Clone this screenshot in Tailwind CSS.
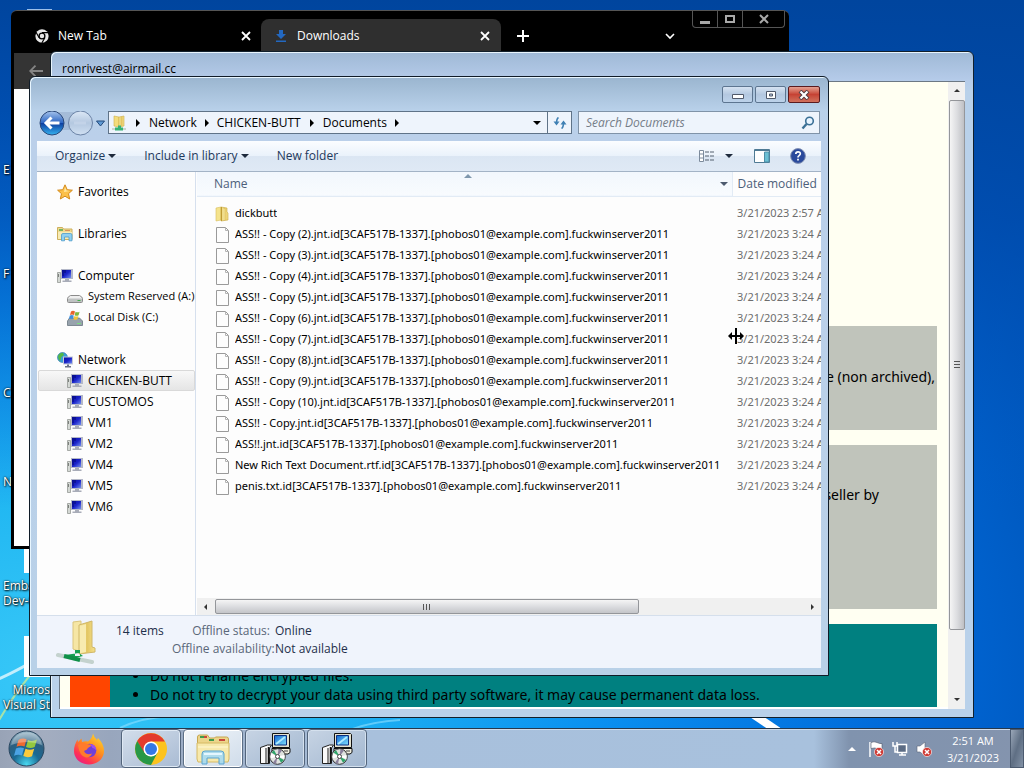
<!DOCTYPE html>
<html lang="en">
<head>
  <meta charset="UTF-8" />
  <meta name="viewport" content="width=device-width, initial-scale=1.0"/>
  <title>Documents</title>
  <script src="https://cdn.jsdelivr.net/npm/@tailwindcss/browser@4"></script>
</head>
<body class="h-screen overflow-hidden font-['Open_Sans','Noto_Sans',sans-serif] text-xs text-black">

  <!-- Shared icons -->
  <svg class="absolute size-0">
    <defs>
      <linearGradient id="gFolder" x1="0" y1="0" x2="1" y2="0">
        <stop offset="0" stop-color="#f9eda6"/><stop offset=".5" stop-color="#e3c663"/><stop offset="1" stop-color="#f5e08a"/>
      </linearGradient>
      <linearGradient id="gScreen" x1="0" y1="0" x2="1" y2="1">
        <stop offset="0" stop-color="#0a12a8"/><stop offset=".5" stop-color="#1a22c8"/><stop offset="1" stop-color="#6f8cf0"/>
      </linearGradient>
      <linearGradient id="gMonitor" x1="0" y1="0" x2="1" y2="1">
        <stop offset="0" stop-color="#1268d0"/><stop offset="1" stop-color="#7fe0ff"/>
      </linearGradient>
    </defs>
    <symbol id="file" viewBox="0 0 16 16">
      <path d="M1.500.5h9l3 3v12h-12z" fill="#fdfdfd" stroke="#9a9a9a"/>
      <path d="M10.500.5v3h3" fill="none" stroke="#b4b4b4"/>
    </symbol>
    <symbol id="folder" viewBox="0 0 16 16">
      <path d="M1 2l5-1v13l-5 1z" fill="#f5e38c" stroke="#d6bd5c" stroke-width=".6"/>
      <path d="M6 1l6 1v4l1 1v7l-7 1z" fill="url(#gFolder)" stroke="#c9a93f" stroke-width=".6"/>
      <path d="M6.500 1v14" stroke="#c09c34"/>
      <path d="M9 3v11" stroke="#f7eaa8"/>
    </symbol>
    <symbol id="star" viewBox="0 0 16 16">
      <path d="M8 .8l2.200 4.900 5.200.5-3.900 3.500 1.200 5.300L8 12.200 3.300 15l1.200-5.300L.6 6.200l5.200-.5z" fill="#fbc04a" stroke="#d48b1c"/>
      <path d="M8 3l1.400 3.600 3.600.4-6 1z" fill="#ffe7a0"/>
    </symbol>
    <symbol id="libraries" viewBox="0 0 16 16">
      <path d="M.5 1.500h5l1 1.500h8.500v10.500H.5z" fill="#f0da92" stroke="#cdb05c"/>
      <path d="M2 4h4" stroke="#4fa84c" stroke-width="1.500"/><path d="M8 4.500h5" stroke="#d8935c"/>
      <path d="M1 6h14v7H1z" fill="#f8ebb4"/>
      <path d="M4.500 14.800V9q0-1.500 1.500-1.500h7.500q1.500 0 1.500 1.500v5.800h-3V11h-4.500v3.800z" fill="#8fd0f0" stroke="#4b9ccc" stroke-width=".8"/>
    </symbol>
    <symbol id="pc" viewBox="0 0 16 16">
      <path d="M.5 4.500h3v10h-3z" fill="#d4d8d4" stroke="#8a8e8a" stroke-width=".7"/>
      <path d="M1.500 6v3" stroke="#7c807c"/>
      <path d="M4 1h12v10H4z" fill="#b4b8c8"/>
      <path d="M5 2h9v8H5z" fill="url(#gScreen)"/>
      <path d="M5 2h4v3H7v3H5z" fill="#060c80" fill-opacity=".6"/>
      <path d="M8 11h4v1.500h2.500V14h-9v-1.500H8z" fill="#a8acb8"/>
    </symbol>
    <symbol id="drive" viewBox="0 0 16 16">
      <path d="M3.500 6.500h9q3 1.500 3 3v3q0 1-1 1h-13q-1 0-1-1v-3q0-1.500 3-3z" fill="#efefef" stroke="#8b8b8b"/>
      <path d="M1 9.500h14v3.500H1z" fill="#bfc2c2"/>
      <path d="M10.500 11.500h3" stroke="#43b04a"/>
    </symbol>
    <symbol id="osdrive" viewBox="0 0 16 16">
      <path d="M2.500 8h10l3 3v4.500h-15V11z" fill="#98a3ad" stroke="#697680" stroke-width=".8"/>
      <path d="M10 13.500h4" stroke="#7be07e"/>
      <path d="M4 1.500q2-1.500 4 0L7 5q-2-1.200-4 0z" fill="#e8632c"/>
      <path d="M8.600 1.800q2 1 4 0l-1 3.400q-2 1-4 0z" fill="#7fb83c"/>
      <path d="M2.800 5.600q2-1.200 4 0l-1 3.400q-2-1.200-4 0z" fill="#3f8fdc"/>
      <path d="M7.400 5.900q2 1 4 0l-1 3.400q-2 1-4 0z" fill="#f3c437"/>
    </symbol>
    <symbol id="network" viewBox="0 0 16 16">
      <circle cx="5.500" cy="5.500" r="5" fill="#3a9fd8" stroke="#2b74a8" stroke-width=".6"/>
      <path d="M1 4q2-3.500 5-3.300L7 3 4.500 5 3 9 1.500 7z" fill="#53b848"/>
      <path d="M6 4.500h10v8H6z" fill="#c4c8d6"/>
      <path d="M7 5.500h8v6H7z" fill="url(#gScreen)"/>
      <path d="M10 12.500h2v1.500h2v1.500H8V14h2z" fill="#6a7288"/>
    </symbol>
    <symbol id="netfolder" viewBox="0 0 16 16">
      <path d="M3 1l5 1v10l-5-1z" fill="#f3dc7c" stroke="#cfae48" stroke-width=".6"/>
      <path d="M8 2l5-1v10l-5 1z" fill="url(#gFolder)" stroke="#cfae48" stroke-width=".6"/>
      <path d="M1 13h14v2H1z" fill="#c9d6cf"/>
      <path d="M4 12.500h8v3H4zM7 10.500h3v3H7z" fill="#35b274"/>
    </symbol>
    <symbol id="installer" viewBox="0 0 32 32">
      <path d="M13.500.5h16l1 1v13h-17z" fill="#e4e2d0" stroke="#111"/>
      <path d="M15.500 2.500h12v9.500h-12z" fill="url(#gMonitor)" stroke="#0b2f80"/>
      <path d="M17 11L26 4" stroke="#aeeaff" stroke-width="2"/>
      <path d="M13 15.500h18v4l-2 1.500H13z" fill="#f0eee0" stroke="#111"/>
      <path d="M25 18h4" stroke="#444"/>
      <path d="M1.500 14.500l7-2.500h4l-2 3v15.500h-9z" fill="#fafafa" stroke="#222"/>
      <path d="M7 15v15" stroke="#8a8a8a" stroke-width="2"/><path d="M9.500 14v16" stroke="#111" stroke-width="1.500"/>
      <circle cx="18.500" cy="23.500" r="7.800" fill="#dfe2df" stroke="#333"/>
      <path d="M18.500 23.500l-6-4 2.500-2.500zM18.500 23.500l6.500 3.500-3 2.800z" fill="#2fa46a"/>
      <path d="M18.500 23.500l-7 2 .6-5zM18.500 23.500l7-1.500v4z" fill="#fff"/>
      <path d="M18.500 23.500l1-7.500 3.500 1.500zM18.500 23.500l-1.500 7.500-3-1.500z" fill="#8a7f9c"/>
      <circle cx="18.500" cy="23.500" r="2" fill="#fff" stroke="#444"/>
    </symbol>
    <symbol id="badge" viewBox="0 0 10 10">
      <circle cx="5" cy="5" r="4.600" fill="#cf3a34" stroke="#fff" stroke-width=".6"/>
      <path d="M3 3l4 4M7 3L3 7" stroke="#fff" stroke-width="1.500"/>
    </symbol>
  </svg>

  <main class="relative flex h-full flex-col bg-[radial-gradient(ellipse_at_5%_88%,#38c8f8_0%,#22b8f2_18%,#0a90f0_40%,#0068d8_62%,#0052b4_80%,#00428e_100%)]">

    <!-- Desktop -->
    <div class="relative flex-1 overflow-hidden">
      <svg class="absolute inset-0 h-full w-full" viewBox="0 0 1024 728" preserveAspectRatio="none" fill="none">
        <defs>
          <linearGradient id="gSky" x1="0" y1="0" x2="0" y2="1"><stop offset="0" stop-color="#00459e"/><stop offset=".3" stop-color="#004cb0" stop-opacity=".7"/><stop offset=".7" stop-color="#0060d0" stop-opacity="0"/></linearGradient>
        </defs>
        <path d="M0 0h1024v728H0z" fill="url(#gSky)"/>
        <path d="M-4 680Q16 672 52 650" stroke="#fff" stroke-opacity=".7" stroke-width="3"/>
        <path d="M-2 722Q16 690 40 664" stroke="#d9f08a" stroke-opacity=".7" stroke-width="2"/>
        <path d="M748 711l30 20" stroke="#fff" stroke-width="8"/>
        <path d="M120 728q20-10 50-12M350 730q20-8 50-10" stroke="#8fe0ff" stroke-opacity=".6" stroke-width="2"/>
        <path d="M27 10h25" stroke="#9cc0ea" stroke-width="2"/>
      </svg>

      <!-- Shortcut labels -->
      <div class="absolute left-[3px] top-[162px] flex flex-col whitespace-nowrap leading-4 text-white text-shadow-[1px_1px_2px_#000,0_0_2px_#000]">
        <span class="mb-[88px]">E</span>
        <span class="mb-[103px]">F</span>
        <span class="mb-[73px]">C</span>
        <span class="mb-[88px]">N</span>
        <span class="leading-[15px]">Embarcadero<br/>Dev-C++</span>
      </div>
      <div class="absolute left-6 top-[540px] h-[33px] w-8 bg-white"></div>
      <div class="absolute left-6 top-[636px] h-[41px] w-8 bg-white"></div>
      <p class="absolute left-[3px] top-[682px] whitespace-nowrap text-center leading-[15px] text-white text-shadow-[1px_1px_2px_#000,0_0_2px_#000]">Microsoft<br/>Visual Studio</p>

      <!-- Chrome window -->
      <section class="absolute bottom-[179px] left-[11px] right-[235px] top-[10px] flex flex-col rounded-t-md border-t border-[#555] bg-black pb-[3px] pl-[3px] pr-0.5">
        <div class="relative flex h-[42px] items-end">
          <div class="flex h-[34px] w-[247px] items-center pl-[21px] pr-[10px] text-white">
            <svg class="mr-[9px] size-3.5" viewBox="0 0 16 16">
              <circle cx="8" cy="8" r="7.600" fill="#e8e8e8"/>
              <path d="M8 4.200h7M4.700 9.900L1.200 3.800M11.300 9.900L7.800 16" stroke="#000" stroke-width="1.300"/>
              <circle cx="8" cy="8" r="3.300" fill="#e8e8e8" stroke="#000" stroke-width="1.500"/>
            </svg>
            <span class="flex-1">New Tab</span>
            <button aria-label="Close New Tab"><svg class="size-[10px]" viewBox="0 0 10 10"><path d="M1 1l8 8M9 1L1 9" stroke="#fff" stroke-width="1.800"/></svg></button>
          </div>
          <div class="flex h-[34px] w-60 items-center rounded-t-lg bg-[#2f2f2f] pl-3.5 pr-[11px] text-white">
            <svg class="mr-[10px] size-3" viewBox="0 0 12 12"><path d="M4 0h4v4h3L6 9 1 4h3zM1 10.500h10V12H1z" fill="#2368c0"/></svg>
            <span class="flex-1">Downloads</span>
            <button aria-label="Close Downloads"><svg class="size-[10px]" viewBox="0 0 10 10"><path d="M1 1l8 8M9 1L1 9" stroke="#fff" stroke-width="1.800"/></svg></button>
          </div>
          <button class="mb-[11px] ml-4" aria-label="New tab"><svg class="size-3" viewBox="0 0 12 12"><path d="M6 0v12M0 6h12" stroke="#fff" stroke-width="2"/></svg></button>
          <button class="mb-[13px] ml-auto mr-28" aria-label="Search tabs"><svg class="h-2 w-[10px]" viewBox="0 0 10 8"><path d="M1 2l4 4 4-4" fill="none" stroke="#fff" stroke-width="1.600"/></svg></button>
          <div class="absolute right-0.5 top-0 flex h-[17px] divide-x divide-[#555] rounded-b-sm border border-t-0 border-[#555]">
            <button class="w-[25px]" aria-label="Minimize"><svg class="mx-auto h-3 w-4" viewBox="0 0 16 12"><path d="M3 8h10v3H3z" fill="#a8a8a8"/></svg></button>
            <button class="w-[25px]" aria-label="Maximize"><svg class="mx-auto h-3 w-4" viewBox="0 0 16 12"><path d="M4 3h8v6H4z" fill="none" stroke="#a8a8a8" stroke-width="2"/></svg></button>
            <button class="w-[41px]" aria-label="Close"><svg class="mx-auto h-3 w-4" viewBox="0 0 16 12"><path d="M4 2l8 8M12 2l-8 8" stroke="#a8a8a8" stroke-width="2"/></svg></button>
          </div>
        </div>
        <div class="flex h-9 items-center bg-[#343434] pl-[15px]">
          <button aria-label="Back"><svg class="h-3 w-3.5" viewBox="0 0 14 12"><path d="M14 6H1M6.500.7L1.200 6l5.300 5.300" fill="none" stroke="#858585" stroke-width="1.800"/></svg></button>
        </div>
        <div class="flex-1 bg-white"></div>
      </section>

      <!-- Ransom note window -->
      <section class="absolute bottom-[10px] left-[50px] right-[50px] top-[51px] flex flex-col rounded-t-md border border-[#12202c] bg-[linear-gradient(#9fb9d6,#b5cbe9_28px,#b9d1ea_40px)] px-2 pb-2 shadow-[inset_1px_1px_0_#e8f4fc]">
        <h2 class="pl-[3px] pt-[9px] text-xs leading-4">ronrivest@airmail.cc</h2>
        <div class="mt-1 flex min-h-0 flex-1 border-l border-t border-[#6c7884] bg-[#fffff2]">
          <div class="flex min-w-0 flex-1 flex-col gap-[15px] overflow-hidden border-b-2 border-white pl-[10px] pr-[11px] pt-[244px] font-['Noto_Sans',sans-serif] text-sm">
            <div class="flex h-[104px] shrink-0 items-center justify-end bg-[#c0c4bb] pb-0.5 pr-0.5">e (non archived),</div>
            <div class="h-[164px] shrink-0 bg-[#c0c4bb] pr-[58px] pt-10 text-right">seller by</div>
            <div class="min-h-0 flex-1 border-l-40 border-[#ff4500] bg-[#008080] pl-10 pt-[42px]">
              <ul class="list-disc leading-[19px]">
                <li>Do not rename encrypted files.</li>
                <li>Do not try to decrypt your data using third party software, it may cause permanent data loss.</li>
              </ul>
            </div>
          </div>
          <div class="flex w-[17px] flex-col items-center bg-[#f0f0f0]">
            <svg class="h-[18px] w-2" viewBox="0 0 8 18"><path d="M1 10l3-3 3 3z" fill="#333"/></svg>
            <div class="flex h-[530px] w-4 items-center justify-center rounded-xs border border-[#94969a] bg-linear-to-r from-[#f5f5f5] via-[#dcdde0] to-[#bfc0c4]">
              <svg class="h-2 w-2" viewBox="0 0 8 8"><path d="M1 .5h6M1 3.500h6M1 6.500h6" stroke="#555"/></svg>
            </div>
            <svg class="mt-auto h-[18px] w-2" viewBox="0 0 8 18"><path d="M1 7l3 3 3-3z" fill="#333"/></svg>
          </div>
        </div>
      </section>

      <!-- Explorer window -->
      <section class="absolute bottom-[52px] left-[29px] right-[195px] top-[76px] flex flex-col rounded-t-md border border-[#101c28] bg-[linear-gradient(#9ab5cf,#b9d1ea_34px,#bbd0ea_60px,#b9d1e8)] px-[7px] pb-[7px] shadow-[inset_1px_1px_0_#e8f6ff]">
        <div class="flex h-[34px] items-start justify-end gap-0.5 pr-px pt-[9px]">
          <button aria-label="Minimize" class="flex h-[17px] w-[31px] items-center justify-center rounded-xs border border-[#5d7590] bg-linear-to-b from-[#d6e3f2] via-[#b4c8e0] to-[#bcd2ea]"><svg class="h-[10px] w-3" viewBox="0 0 12 10"><path d="M.5 4.500h11v4H.5z" fill="#fff" stroke="#50596a"/></svg></button>
          <button aria-label="Maximize" class="flex h-[17px] w-[31px] items-center justify-center rounded-xs border border-[#5d7590] bg-linear-to-b from-[#d6e3f2] via-[#b4c8e0] to-[#bcd2ea]"><svg class="h-[10px] w-3" viewBox="0 0 12 10"><path d="M1.500 1.500h9v7h-9z" fill="#fff" stroke="#50596a"/><path d="M4.500 4h3v2h-3z" fill="#b4c8e0" stroke="#50596a"/></svg></button>
          <button aria-label="Close" class="flex h-[17px] w-8 items-center justify-center rounded-xs border border-[#5a1a1e] bg-linear-to-b from-[#e3a092] via-[#c64234] to-[#d0705c]"><svg class="h-[10px] w-3" viewBox="0 0 12 10"><path d="M2 1l8 8M10 1L2 9" stroke="#4c3a40" stroke-width="4"/><path d="M2.500 1.500l7 7M9.500 1.500l-7 7" stroke="#fff" stroke-width="2.200"/></svg></button>
        </div>

        <!-- Address bar -->
        <div class="flex h-[30px] items-start pr-px">
          <svg class="h-7 w-[71px] shrink-0" viewBox="0 0 71 28">
            <defs>
              <linearGradient id="gBack" x1="0" y1="0" x2="0" y2="1"><stop offset="0" stop-color="#a7c4ec"/><stop offset=".48" stop-color="#2f68c4"/><stop offset=".5" stop-color="#0c3c9e"/><stop offset="1" stop-color="#35b3f0"/></linearGradient>
              <linearGradient id="gFwd" x1="0" y1="0" x2="0" y2="1"><stop offset="0" stop-color="#dce8f6"/><stop offset=".5" stop-color="#b4c8e0"/><stop offset="1" stop-color="#d0e0f2"/></linearGradient>
            </defs>
            <path d="M15 1h28q8 0 12 8l-6 10H15z" fill="#9db4d0" fill-opacity=".7"/>
            <circle cx="15" cy="12" r="12" fill="url(#gBack)" stroke="#2b4878"/>
            <path d="M22.500 12h-12M14.500 6.500L9 12l5.500 5.500" fill="none" stroke="#fff" stroke-width="3"/>
            <circle cx="43.500" cy="12" r="12" fill="url(#gFwd)" stroke="#6b83a6"/>
            <path d="M37 12h12" stroke="#c3d3e8" stroke-width="3"/>
            <path d="M59.500 10h8l-4 5z" fill="#5f9ad4" stroke="#234a7c"/>
          </svg>
          <nav class="flex h-[23px] min-w-0 flex-1 items-center border border-[#5f7388] bg-[#eef4fc]">
            <svg class="ml-0.5 size-4"><use href="#netfolder"/></svg>
            <svg class="mx-[9px] h-2 w-1" viewBox="0 0 4 8"><path d="M0 0l4 4-4 4z"/></svg>
            <a href="#network">Network</a>
            <svg class="mx-2 h-2 w-1" viewBox="0 0 4 8"><path d="M0 0l4 4-4 4z"/></svg>
            <a href="#host">CHICKEN-BUTT</a>
            <svg class="mx-[9px] h-2 w-1" viewBox="0 0 4 8"><path d="M0 0l4 4-4 4z"/></svg>
            <a href="#documents">Documents</a>
            <svg class="mx-2 h-2 w-1" viewBox="0 0 4 8"><path d="M0 0l4 4-4 4z"/></svg>
            <button class="ml-auto mr-1.5" aria-label="Previous locations"><svg class="h-1 w-2" viewBox="0 0 8 4"><path d="M0 0h8L4 4z"/></svg></button>
            <button class="flex h-full w-6 items-center justify-center border-l border-[#5f7388]" aria-label="Refresh">
              <svg class="h-3 w-3.5" viewBox="0 0 14 12"><path d="M5.500.5Q3.500 1.500 3.500 7M8.500 11.500q2-1 2-6.500" fill="none" stroke="#3f80b4" stroke-width="1.600"/><path d="M.5 4.500h6l-3 4zM7.500 7.500h6l-3-4z" fill="#3f80b4"/></svg>
            </button>
          </nav>
          <label class="ml-[6px] flex h-[23px] w-[242px] items-center border border-[#8093a8] bg-[#eef4fc] pl-[7px] pr-1">
            <input type="text" aria-label="Search Documents" placeholder="Search Documents" class="min-w-0 flex-1 italic outline-none placeholder:text-[#757d88]"/>
            <svg class="size-3.5" viewBox="0 0 14 14"><circle cx="8.500" cy="5" r="3.800" fill="#e8f4ff" stroke="#3b7096" stroke-width="1.600"/><path d="M5.500 8L1.500 12.500" stroke="#3b7096" stroke-width="2.400"/></svg>
          </label>
        </div>

        <!-- Toolbar -->
        <div class="flex h-[31px] shrink-0 items-center border-b border-[#a3b3c6] bg-[linear-gradient(#fbfdff,#eaf2fb_50%,#dbe6f3_51%,#dfe9f5)] pl-[18px] pr-[15px] text-[#1e395b]">
          <button class="flex items-center gap-[3px]">Organize<svg class="h-1 w-2" viewBox="0 0 8 4"><path d="M0 0h8L4 4z" fill="#1e2a3c"/></svg></button>
          <button class="ml-7 flex items-center gap-[3px]">Include in library<svg class="h-1 w-2" viewBox="0 0 8 4"><path d="M0 0h8L4 4z" fill="#1e2a3c"/></svg></button>
          <button class="ml-7">New folder</button>
          <button class="ml-auto flex items-center gap-[10px]" aria-label="Change your view">
            <svg class="h-3 w-4" viewBox="0 0 16 12"><path d="M.5.5h4v11h-4zM.5 4h4M.5 8h4" fill="#fff" stroke="#7c8b9c"/><path d="M6 2h4M6 6h4M6 10h4M11 2h4M11 6h4M11 10h4" stroke="#54616f"/></svg>
            <svg class="h-1 w-2" viewBox="0 0 8 4"><path d="M0 0h8L4 4z" fill="#1e2a3c"/></svg>
          </button>
          <button class="ml-[21px]" aria-label="Show the preview pane">
            <svg class="h-3.5 w-4" viewBox="0 0 16 14"><path d="M.5.5h15v13H.5z" fill="#fff" stroke="#4f7a94"/><path d="M0 1.500h16" stroke="#4f7a94"/><path d="M10.500 3h4.500v10h-4.500z" fill="#6cc0d4" stroke="#4f8ea6"/></svg>
          </button>
          <button class="ml-5" aria-label="Get help">
            <svg class="size-4" viewBox="0 0 16 16"><circle cx="8" cy="8" r="7.400" fill="#2a4a9c" stroke="#8492b4"/><path d="M5.800 6q0-2.200 2.300-2.200t2.200 2q0 1-1.200 1.800T8 9.500M8 10.800v1.700" fill="none" stroke="#fff" stroke-width="1.700"/></svg>
          </button>
        </div>

        <div class="flex min-h-0 flex-1 bg-[#fdfdfd]">
          <!-- Navigation pane -->
          <aside id="nav" class="w-[159px] shrink-0 overflow-hidden whitespace-nowrap border-r border-[#d6e0ee] pl-px pt-[9px]"></aside>

          <!-- File list -->
          <div class="flex min-w-0 flex-1 flex-col pl-px">
            <div class="min-h-0 flex-1 overflow-hidden">
              <table class="w-full table-fixed">
                <thead>
                  <tr class="h-6 border-b border-[#e2ebf5] bg-linear-to-b from-[#f2f7fd] to-[#f8fbfe] text-left text-[#4c607a]">
                    <th class="relative w-[535px] border-r border-[#e2ebf5] pl-[17px] pr-1 font-normal">
                      <div class="flex items-center justify-between">Name<svg class="h-1 w-2" viewBox="0 0 8 4"><path d="M0 0h8L4 4z" fill="#4c5a6e"/></svg></div>
                      <svg class="absolute left-1/2 top-0.5 h-1 w-2" viewBox="0 0 8 4"><path d="M0 4l4-4 4 4z" fill="#7f97ad"/></svg>
                    </th>
                    <th class="overflow-hidden whitespace-nowrap bg-[#fdfdfd] pl-[5px] font-normal">Date modified</th>
                  </tr>
                  <tr class="h-[7px]"></tr>
                </thead>
                <tbody id="files" class="font-['Noto_Sans',sans-serif] text-[11px]"></tbody>
              </table>
            </div>
            <div class="flex h-[17px] items-center bg-[#f0f0f0]">
              <svg class="h-2 w-[18px]" viewBox="0 0 18 8"><path d="M10 1v6L7 4z" fill="#333"/></svg>
              <div class="flex h-[15px] w-[424px] items-center justify-center rounded-xs border border-[#94969a] bg-linear-to-b from-[#f5f5f5] via-[#dcdde0] to-[#c4c5c9]">
                <svg class="size-2" viewBox="0 0 8 8"><path d="M.5 1v6M3.500 1v6M6.500 1v6" stroke="#555"/></svg>
              </div>
              <svg class="ml-auto h-2 w-[18px]" viewBox="0 0 18 8"><path d="M8 1v6l3-3z" fill="#333"/></svg>
            </div>
          </div>
        </div>

        <!-- Details pane -->
        <footer class="flex h-[53px] shrink-0 items-start border-t border-[#d5dfec] bg-[#f0f4fc] pl-[18px] text-[#1e2f4b]">
          <svg class="mt-1 h-11 w-11" viewBox="0 0 44 44">
            <path d="M18 2l8-1v31l-8-3z" fill="#f6e6a4" stroke="#dcc67c"/>
            <path d="M24 5l13-4v26l3 1v4l-16 2z" fill="url(#gFolder)" stroke="#d0b768"/>
            <path d="M25 6l6-2v28l-6 1z" fill="#f8ebb0"/>
            <path d="M3 35l34 7" stroke="#c4d2ce" stroke-width="4" stroke-linecap="round"/>
            <path d="M10 35l10 3 8-2-4-3zM20 30h5v6h-5z" fill="#16a052"/>
            <path d="M9 36l16 4" stroke="#0f9048" stroke-width="4"/>
          </svg>
          <p class="ml-[17px] w-14 pt-[6px] leading-[18px]">14 items</p>
          <dl class="grid grid-cols-[98px_auto] gap-x-[5px] whitespace-nowrap pt-[6px] leading-[18px]">
            <dt class="text-right text-[#5a6779]">Offline status:</dt><dd>Online</dd>
            <dt class="text-right text-[#5a6779]">Offline availability:</dt><dd>Not available</dd>
          </dl>
        </footer>
      </section>

      <!-- Column resize pointer -->
      <svg class="absolute left-[728px] top-[328px] h-4 w-4" viewBox="0 0 16 16"><path d="M0 8l4-4v3h8V4l4 4-4 4V9H4v3zM7 0h2v16H7z"/></svg>
    </div>

    <!-- Taskbar -->
    <footer class="flex h-10 shrink-0 items-center border-t border-[#26384c] bg-[linear-gradient(90deg,#98a3b6_0,#a3adc0_45px,#98a6bd_110px,#a8c0dc_370px,#a8c1dd_calc(100%-210px),#8093ae_calc(100%-175px),#8494ae_100%)] shadow-[inset_0_1px_0_#cfdcec]">
      <button class="ml-2" aria-label="Start">
        <svg class="size-[37px]" viewBox="0 0 37 37">
          <defs><radialGradient id="gOrb" cx=".5" cy=".95" r=".95"><stop offset="0" stop-color="#4ad8f0"/><stop offset=".4" stop-color="#1a6a94"/><stop offset=".7" stop-color="#2c5f80"/><stop offset="1" stop-color="#9fbccc"/></radialGradient></defs>
          <circle cx="18.500" cy="18.500" r="17.500" fill="url(#gOrb)" stroke="#2a4760"/>
          <path d="M10.500 10q4-2.500 8-.8l-2 7.300q-4-1.500-8 .3z" fill="#ee6a30"/>
          <path d="M20 10q4 2 9-.5l-2.300 7.600q-4.500 2-8.700-.1z" fill="#93c83e"/>
          <path d="M8 18.500q4-2 8-.3l-2.200 7.200q-4-1.500-7.800.4z" fill="#4ba3e4"/>
          <path d="M17.500 18.700q4.300 2 8.700.1L24 26.200q-4.500 2-8.700-.2z" fill="#fccb3c"/>
          <path d="M3 15Q6 3 18.500 2.500T34 15q-15-6-31 0z" fill="#fff" fill-opacity=".3"/>
        </svg>
      </button>
      <button class="ml-7 mr-4" aria-label="Firefox">
        <svg class="size-8" viewBox="0 0 32 32">
          <defs><linearGradient id="gFox" x1=".9" y1="0" x2=".2" y2="1"><stop offset="0" stop-color="#ffe22e"/><stop offset=".45" stop-color="#ff8b1e"/><stop offset=".8" stop-color="#ff2f55"/><stop offset="1" stop-color="#e3208c"/></linearGradient></defs>
          <path d="M20 .5q1 4 4 6.500l1-2q6 6 6 13C31 26 24 31.500 16 31.500S1 26 1 18q0-6 3.500-11.500L5 9l3.500-3.500.5 3.500q3-1 6-.5Q19 6 20 .5z" fill="url(#gFox)"/>
          <circle cx="16.500" cy="17.500" r="6.800" fill="#7040d8"/>
          <path d="M5 12q5-3.500 9-1l4 .8q1 1.200-1.500 2.200-2 .5-2.500 2.500l-3 1.500q2.500 5 8 2.500-1.500 4-6 4-6.500-1-8-12.500z" fill="#ff7a2c"/>
          <path d="M17 11q6 0 6.500 7-1.500-3-4-3z" fill="#a050e8"/>
        </svg>
      </button>
      <div class="flex h-full gap-0.5">
        <button aria-label="Google Chrome" class="flex w-[60px] items-center justify-center rounded-sm border border-[#53657c] bg-linear-to-br from-[#d3deeb] to-[#a9bbd3] shadow-[inset_0_0_0_1px_#dfe9f4]">
          <svg class="size-8" viewBox="0 0 32 32">
            <circle cx="16" cy="16" r="16" fill="#fcc31e"/>
            <path d="M16 8.500H29.900A16 16 0 0 0 2.200 8l6.500 12z" fill="#e33b2e"/>
            <path d="M2.200 8A16 16 0 0 0 16 32l6.500-12.200L16 23.500 9.500 19.800z" fill="#279847"/>
            <circle cx="16" cy="16" r="7.500" fill="#fff"/><circle cx="16" cy="16" r="6" fill="#3478e5"/>
          </svg>
        </button>
        <button aria-label="Windows Explorer" class="flex w-[60px] items-center justify-center rounded-sm border border-[#5c6f86] bg-linear-to-br from-[#f2f6fa] to-[#cfdcea] shadow-[inset_0_0_0_1px_#fff]">
          <svg class="h-8 w-9" viewBox="0 0 36 32">
            <path d="M2.500 4q0-2 2-2h8l2 3h5l1-1h11q2 0 2 2v20h-31z" fill="#ecd58a" stroke="#c6a650"/>
            <path d="M5 4h4M14 7h5" stroke="#3f9c4c" stroke-width="2"/><path d="M9 4h3M24 7h6" stroke="#c8473c" stroke-width="2"/>
            <path d="M2 10h32v16l-1 3H3l-1-3z" fill="#f7e9ac" stroke="#d6ba64"/>
            <path d="M3 14h30" stroke="#fff8d4"/>
            <path d="M7 31V21q0-3 3-3h16q3 0 3 3v10h-5v-6H12v6z" fill="#a6daf2" fill-opacity=".9" stroke="#5aa4cf"/>
            <path d="M9 21h18" stroke="#e4f7ff" stroke-width="2"/>
          </svg>
        </button>
        <button aria-label="Installer" class="flex w-[60px] items-center justify-center rounded-sm border border-[#53657c] bg-linear-to-br from-[#c7d4e4] to-[#a2b7d0] shadow-[inset_0_0_0_1px_#d5e1ee]"><svg class="size-8"><use href="#installer"/></svg></button>
        <button aria-label="Installer" class="flex w-[60px] items-center justify-center rounded-sm border border-[#53657c] bg-linear-to-br from-[#c7d4e4] to-[#a2b7d0] shadow-[inset_0_0_0_1px_#d5e1ee]"><svg class="size-8"><use href="#installer"/></svg></button>
      </div>

      <div class="ml-auto flex h-full items-center text-white">
        <button class="mr-3" aria-label="Show hidden icons"><svg class="h-1 w-2" viewBox="0 0 8 4"><path d="M0 4l4-4 4 4z" fill="#fff"/></svg></button>
        <div class="flex gap-2">
          <svg class="size-4" viewBox="0 0 16 16"><path d="M2 1v15" stroke="#fff" stroke-width="1.500"/><path d="M3 1.500q3-1.500 6 0t5 1v6q-3 0-5-1t-6 0z" fill="#fff" stroke="#4b5668" stroke-width=".6"/><use href="#badge" x="6" y="6" width="10" height="10"/></svg>
          <svg class="size-4" viewBox="0 0 16 16"><path d="M5.500 3.500h9v8h-9z" fill="#5c6c84" stroke="#fff" stroke-width="1.500"/><path d="M7 14h7M10 12v2M1 1v4h4V1M3 5v6h2" fill="none" stroke="#fff" stroke-width="1.500"/></svg>
          <svg class="size-4" viewBox="0 0 16 16"><path d="M1 5h3l5-4v14l-5-4H1z" fill="#fff" stroke="#5c6678" stroke-width=".6"/><use href="#badge" x="6" y="6" width="10" height="10"/></svg>
        </div>
        <time class="ml-3 mr-2 w-[58px] whitespace-nowrap text-center text-[11px] leading-[17px]">2:51 AM<br/>3/21/2023</time>
        <button class="h-full w-3.5 border border-[#4c5b70] bg-linear-to-br from-[#9aa7b8] via-[#5f6f84] to-[#8392a6]" aria-label="Show desktop"></button>
      </div>
    </footer>
  </main>

  <script>
    const places = [
      { icon: 'star', name: 'Favorites' },
      null,
      { icon: 'libraries', name: 'Libraries' },
      null,
      { icon: 'pc', name: 'Computer' },
      { icon: 'drive', name: 'System Reserved (A:)', child: true, size: 'text-[11px]' },
      { icon: 'osdrive', name: 'Local Disk (C:)', child: true, size: 'text-[11px]' },
      null,
      { icon: 'network', name: 'Network' },
      { icon: 'pc', name: 'CHICKEN-BUTT', child: true, selected: true },
      ...['CUSTOMOS', 'VM1', 'VM2', 'VM4', 'VM5', 'VM6'].map(name => ({ icon: 'pc', name, child: true }))
    ];

    document.getElementById('nav').innerHTML = places.map(place => {
      if (!place) return '<div class="h-[21px]"></div>';
      const indent = place.child ? 'pl-7' : 'pl-[18px]';
      const state = place.selected ? 'border-[#d9d9d9] bg-linear-to-b from-[#f8f8f8] to-[#e5e5e5]' : 'border-transparent';
      return `
        <a href="#${place.icon}" class="flex h-[21px] items-center gap-[5px] rounded-xs border ${indent} ${state} ${place.size || ''}">
          <svg class="size-4 shrink-0"><use href="#${place.icon}"/></svg>${place.name}
        </a>`;
    }).join('');

    const suffix = '.id[3CAF517B-1337].[phobos01@example.com].fuckwinserver2011';
    const copies = [2, 3, 4, 5, 6, 7, 8, 9, 10].map(n => `ASS!! - Copy (${n}).jnt`);
    const files = [...copies, 'ASS!! - Copy.jnt', 'ASS!!.jnt', 'New Rich Text Document.rtf', 'penis.txt'];
    const rows = [
      { icon: 'folder', name: 'dickbutt', date: '3/21/2023 2:57 AM' },
      ...files.map(name => ({ icon: 'file', name: name + suffix, date: '3/21/2023 3:24 AM' }))
    ];

    document.getElementById('files').innerHTML = rows.map(row => `
      <tr class="h-[21px] whitespace-nowrap">
        <td class="pl-[18px] pr-2">
          <div class="flex items-center gap-1">
            <svg class="size-4 shrink-0"><use href="#${row.icon}"/></svg>
            <span class="truncate">${row.name}</span>
          </div>
        </td>
        <td class="overflow-hidden pl-[5px] text-[#6d6d6d]">${row.date}</td>
      </tr>
    `).join('');
  </script>
</body>
</html>
